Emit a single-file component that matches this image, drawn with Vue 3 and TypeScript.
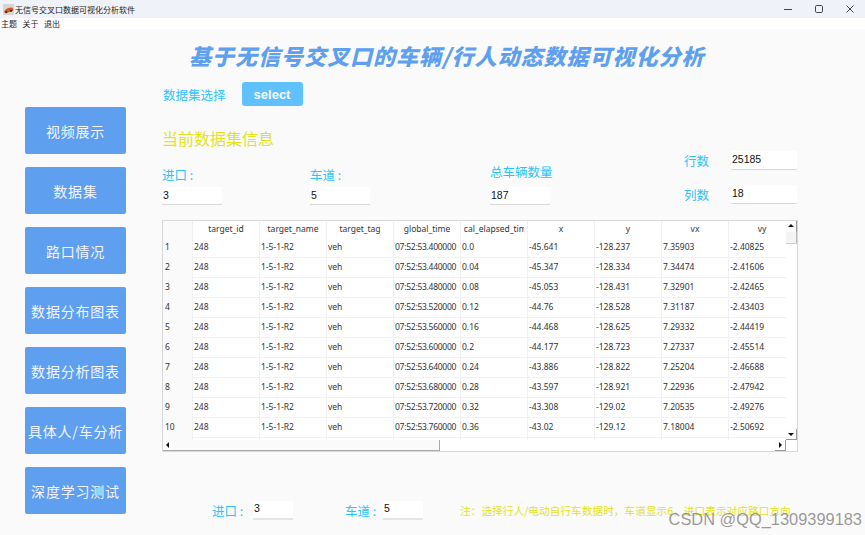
<template>
  <div class="window">
    <header class="titlebar">
      <svg class="app-icon" width="11" height="11" viewBox="0 0 11 11">
        <rect width="11" height="11" fill="#d9d6d2" />
        <path d="M1 8 L2 6 L5 4 L9 3.5 L10.5 5 L10 7 L3 9 Z" fill="#d2571c" />
        <circle cx="3.2" cy="8.2" r="1.1" fill="#3a2a20" />
        <circle cx="8" cy="6.8" r="1.1" fill="#3a2a20" />
      </svg>
      <span class="app-title">无信号交叉口数据可视化分析软件</span>
      <div class="win-controls">
        <svg width="10" height="10" viewBox="0 0 10 10"><path d="M1 5.5H9" stroke="#444" stroke-width="1" /></svg>
        <svg width="10" height="10" viewBox="0 0 10 10"><rect x="1.5" y="1.5" width="7" height="7" rx="1.2" fill="none" stroke="#444" stroke-width="1" /></svg>
        <svg width="10" height="10" viewBox="0 0 10 10"><path d="M1.5 1.5L8.5 8.5M8.5 1.5L1.5 8.5" stroke="#444" stroke-width="1" /></svg>
      </div>
    </header>

    <nav class="menubar">
      <span>主题</span>
      <span>关于</span>
      <span>退出</span>
    </nav>

    <div class="page">
      <h1 class="page-title">基于无信号交叉口的车辆/行人动态数据可视化分析</h1>

      <div class="body">
        <aside class="sidebar">
          <button v-for="item in navItems" :key="item" class="nav-btn">{{ item }}</button>
        </aside>

        <main class="content">
          <div class="select-row">
            <span class="label select-label">数据集选择</span>
            <button class="select-btn">select</button>
          </div>

          <h2 class="section-title">当前数据集信息</h2>

          <div class="info">
            <div class="field entry">
              <span class="label">进口 :</span>
              <div class="value">3</div>
            </div>
            <div class="field lane">
              <span class="label">车道 :</span>
              <div class="value">5</div>
            </div>
            <div class="field total">
              <span class="label">总车辆数量</span>
              <div class="value">187</div>
            </div>
            <div class="dims">
              <div class="dim">
                <span class="label">行数</span>
                <div class="value wide">25185</div>
              </div>
              <div class="dim">
                <span class="label">列数</span>
                <div class="value wide">18</div>
              </div>
            </div>
          </div>

          <div class="table-frame">
            <div class="table-view">
              <div class="table-row head">
                <div class="corner"></div>
                <div v-for="col in columns" :key="col" class="th">
                  <div class="th-clip"><span>{{ col }}</span></div>
                </div>
              </div>
              <div v-for="(row, i) in rows" :key="i" class="table-row">
                <div class="row-no">{{ i + 1 }}</div>
                <div v-for="(cell, j) in row" :key="j" :class="['td', { time: j === 3 }]">{{ cell }}</div>
              </div>
              <div class="table-row">
                <div class="row-no"></div>
                <div v-for="col in columns" :key="col" class="td"></div>
              </div>
            </div>
            <div class="vbar">
              <div class="arrow up"></div>
              <div class="vthumb"></div>
              <div class="spacer"></div>
              <div class="arrow down"></div>
            </div>
            <div class="hbar">
              <div class="arrow left"></div>
              <div class="hthumb"></div>
              <div class="spacer"></div>
              <div class="arrow right"></div>
            </div>
            <div class="bar-corner"></div>
          </div>

          <div class="bottom">
            <span class="label bottom-entry">进口 :</span>
            <div class="value small">3</div>
            <span class="label bottom-lane">车道 :</span>
            <div class="value small">5</div>
            <span class="note">注：选择行人/电动自行车数据时，车道显示6，进口表示对应路口方向</span>
          </div>
        </main>
      </div>

      <div class="watermark">CSDN @QQ_1309399183</div>
    </div>
  </div>
</template>

<script setup lang="ts">
const navItems: string[] = [
  '视频展示',
  '数据集',
  '路口情况',
  '数据分布图表',
  '数据分析图表',
  '具体人/车分析',
  '深度学习测试',
]

const columns: string[] = [
  'target_id',
  'target_name',
  'target_tag',
  'global_time',
  'local_elapsed_time',
  'x',
  'y',
  'vx',
  'vy',
]

// time suffix, elapsed, x, y, vx, vy
const samples: string[][] = [
  ['400000', '0.0', '-45.641', '-128.237', '7.35903', '-2.40825'],
  ['440000', '0.04', '-45.347', '-128.334', '7.34474', '-2.41606'],
  ['480000', '0.08', '-45.053', '-128.431', '7.32901', '-2.42465'],
  ['520000', '0.12', '-44.76', '-128.528', '7.31187', '-2.43403'],
  ['560000', '0.16', '-44.468', '-128.625', '7.29332', '-2.44419'],
  ['600000', '0.2', '-44.177', '-128.723', '7.27337', '-2.45514'],
  ['640000', '0.24', '-43.886', '-128.822', '7.25204', '-2.46688'],
  ['680000', '0.28', '-43.597', '-128.921', '7.22936', '-2.47942'],
  ['720000', '0.32', '-43.308', '-129.02', '7.20535', '-2.49276'],
  ['760000', '0.36', '-43.02', '-129.12', '7.18004', '-2.50692'],
]

const rows = samples.map(([time, ...rest]) => ['248', '1-5-1-R2', 'veh', `07:52:53.${time}`, ...rest])
</script>

<style>
html,
body {
  margin: 0;
  background: #fafafa;
}
</style>

<style scoped>
.window {
  width: 865px;
  height: 535px;
  overflow: hidden;
  display: flex;
  flex-direction: column;
  background: #fafafa;
  font-family: "Noto Sans CJK SC", "Noto Sans", sans-serif;
}

.titlebar {
  height: 18px;
  flex: none;
  display: flex;
  align-items: center;
  padding-left: 3px;
  background: #eff3f9;
}

.app-title {
  margin-left: 1px;
  font-size: 8px;
  color: #222;
}

.win-controls {
  margin-left: auto;
  margin-right: 10px;
  display: flex;
  gap: 21px;
}

.menubar {
  height: 11px;
  flex: none;
  display: flex;
  align-items: center;
  gap: 5.5px;
  padding-left: 1px;
  background: #fff;
  font-size: 8px;
  color: #222;
}

.page {
  position: relative;
  flex: 1;
  min-height: 0;
}

.page-title {
  margin: 13px 0 0 189px;
  font-size: 22px;
  line-height: 27px;
  font-weight: 900;
  font-style: italic;
  letter-spacing: 1px;
  color: #5f9fef;
  white-space: nowrap;
}

.body {
  display: flex;
  margin: 15px 0 0 25px;
}

.sidebar {
  width: 101px;
  flex: none;
  margin-top: 23px;
  display: flex;
  flex-direction: column;
  gap: 13px;
}

.nav-btn {
  height: 47px;
  padding: 0;
  border: none;
  border-radius: 2px;
  background: #5f9ff0;
  color: #f2f6fc;
  font-family: inherit;
  font-size: 14px;
  letter-spacing: 0.8px;
  white-space: nowrap;
}

.content {
  margin-left: 36px;
  width: 640px;
}

.label {
  color: #2cc4f8;
  font-size: 12.5px;
  white-space: nowrap;
}

.select-row {
  height: 24px;
  margin-top: -2px;
  display: flex;
  align-items: center;
}

.select-label {
  margin-left: 1px;
}

.select-btn {
  width: 61px;
  height: 24px;
  margin-left: 16px;
  padding: 0;
  border: none;
  border-radius: 3px;
  background: #5fc1fe;
  color: #f4f9fd;
  font-family: "Liberation Sans", sans-serif;
  font-size: 13px;
  font-weight: 700;
}

.section-title {
  margin: 20px 0 0;
  font-size: 16px;
  line-height: 24px;
  font-weight: 400;
  color: #e3e31a;
}

.info {
  position: relative;
  height: 70px;
  display: flex;
}

.field {
  display: flex;
  flex-direction: column;
  gap: 3px;
  justify-content: flex-end;
  padding-bottom: 15px;
}

.total {
  gap: 6px;
}

.entry {
  width: 148px;
}

.lane {
  width: 180px;
}

.value {
  width: 60px;
  height: 18px;
  box-sizing: border-box;
  padding-left: 1px;
  background: #fff;
  border-bottom: 1px solid #d8d8d8;
  font-family: "Liberation Sans", sans-serif;
  font-size: 10.5px;
  line-height: 16px;
  color: #111;
}

.dims {
  margin-left: auto;
  margin-top: 1px;
  margin-right: 5px;
  display: flex;
  flex-direction: column;
  gap: 15px;
}

.dim {
  display: flex;
  align-items: center;
  gap: 22px;
}

.value.wide {
  width: 66px;
  height: 19px;
}

.table-frame {
  width: 636px;
  height: 232px;
  box-sizing: border-box;
  display: grid;
  grid-template-columns: 623px 11px;
  grid-template-rows: 219px 11px;
  border: 1px solid #d8d8d8;
  border-left-width: 1px;
  background: #fff;
}

.table-view {
  overflow: hidden;
  font-family: "Noto Sans", sans-serif;
  font-size: 8.5px;
  color: #333;
}

.table-row {
  display: grid;
  grid-template-columns: 30px repeat(9, 67px);
  height: 20px;
}

.table-row.head {
  height: 16px;
}

.th {
  box-sizing: border-box;
  padding: 0 3px;
  line-height: 15px;
  border-right: 1px solid #f0f0f0;
}

.th-clip {
  overflow: hidden;
  display: flex;
  justify-content: center;
  white-space: nowrap;
}

.corner {
  box-sizing: border-box;
  background: #fafafa;
  border-right: 1px solid #f0f0f0;
}

.row-no,
.td {
  box-sizing: border-box;
  line-height: 20px;
  border-bottom: 1px solid #f1f1f1;
}

.td {
  padding-left: 1px;
  border-right: 1px solid #f0f0f0;
}

.td.time {
  letter-spacing: -0.27px;
}

.row-no {
  padding-left: 2px;
  background: #fafafa;
  border-right: 1px solid #f0f0f0;
  border-bottom-color: #fafafa;
}

.vbar {
  display: flex;
  flex-direction: column;
  background: #fff;
}

.hbar {
  display: flex;
  background: #fff;
}

.spacer {
  flex: 1;
}

.vthumb {
  height: 12px;
  box-sizing: border-box;
  background: #f4f4f4;
  border-right: 1px solid #bbb;
  border-bottom: 1px solid #ccc;
}

.hthumb {
  width: 266px;
  box-sizing: border-box;
  background: #fafafa;
  border-right: 1px solid #aaa;
  border-bottom: 1px solid #aaa;
}

.arrow {
  width: 11px;
  height: 11px;
  box-sizing: border-box;
  position: relative;
  flex: none;
  background: #fdfdfd;
}

.arrow::after {
  content: "";
  position: absolute;
  left: 2px;
  top: 2px;
  border: 3px solid transparent;
}

.arrow.up {
  border-right: 1px solid #999;
}

.arrow.down {
  border-right: 1px solid #999;
  border-bottom: 1px solid #999;
}

.arrow.left {
  border-bottom: 1px solid #aaa;
}

.arrow.right {
  border-bottom: 1px solid #999;
  border-right: 1px solid #999;
}

.arrow.up::after {
  top: 0;
  border-bottom-color: #111;
}

.arrow.down::after {
  top: 4px;
  border-top-color: #111;
}

.arrow.left::after {
  left: 0;
  border-right-color: #111;
}

.arrow.right::after {
  left: 4px;
  border-left-color: #111;
}

.bottom {
  margin-top: 49px;
  display: flex;
  align-items: center;
  height: 19px;
}

.bottom-entry {
  margin-left: 50px;
  width: 41px;
}

.bottom-lane {
  margin-left: 52px;
  width: 38px;
}

.value.small {
  width: 40px;
  height: 19px;
  line-height: 15px;
  border-bottom: 2px solid #e4e4e4;
}

.note {
  margin-left: 37px;
  font-size: 10.7px;
  color: #e3e31a;
  white-space: nowrap;
}

.watermark {
  position: absolute;
  right: 3px;
  bottom: 6px;
  font-family: "Liberation Sans", sans-serif;
  font-size: 16.4px;
  color: rgba(120, 120, 120, 0.75);
  white-space: nowrap;
}
</style>
